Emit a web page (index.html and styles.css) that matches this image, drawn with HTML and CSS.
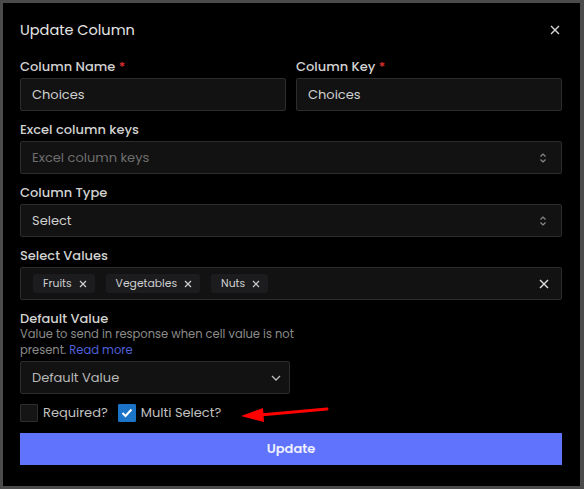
FILE: index.html
```html
<!DOCTYPE html>
<html>
<head>
<meta charset="utf-8">
<link rel="stylesheet" href="styles.css">
</head>
<body>
<div class="modal">
  <div class="header">
    <span class="title">Update Column</span>
    <svg class="close" width="10" height="10" viewBox="0 0 10 10"><path d="M1 1L9 9M9 1L1 9" stroke="#d8d8d8" stroke-width="1.4"/></svg>
  </div>
  <div class="form">
    <div class="row2">
      <div class="field">
        <label class="label">Column Name <span class="req">*</span></label>
        <div class="input">Choices</div>
      </div>
      <div class="field">
        <label class="label">Column Key <span class="req">*</span></label>
        <div class="input">Choices</div>
      </div>
    </div>
    <div class="field">
      <label class="label">Excel column keys</label>
      <div class="input select"><span class="placeholder">Excel column keys</span>
        <svg class="updown" width="8" height="12" viewBox="0 0 8 12"><path d="M1.5 4.5L4 2L6.5 4.5M1.5 7.5L4 10L6.5 7.5" fill="none" stroke="#8a8a8a" stroke-width="1.2"/></svg>
      </div>
    </div>
    <div class="field">
      <label class="label">Column Type</label>
      <div class="input select"><span>Select</span>
        <svg class="updown" width="8" height="12" viewBox="0 0 8 12"><path d="M1.5 4.5L4 2L6.5 4.5M1.5 7.5L4 10L6.5 7.5" fill="none" stroke="#8a8a8a" stroke-width="1.2"/></svg>
      </div>
    </div>
    <div class="field">
      <label class="label">Select Values</label>
      <div class="input tags">
        <span class="chip">Fruits <svg width="8" height="8" viewBox="0 0 8 8"><path d="M1 1L7 7M7 1L1 7" stroke="#cfcfcf" stroke-width="1.2"/></svg></span>
        <span class="chip">Vegetables <svg width="8" height="8" viewBox="0 0 8 8"><path d="M1 1L7 7M7 1L1 7" stroke="#cfcfcf" stroke-width="1.2"/></svg></span>
        <span class="chip">Nuts <svg width="8" height="8" viewBox="0 0 8 8"><path d="M1 1L7 7M7 1L1 7" stroke="#cfcfcf" stroke-width="1.2"/></svg></span>
        <svg class="clear" width="10" height="10" viewBox="0 0 10 10"><path d="M1 1L9 9M9 1L1 9" stroke="#e0e0e0" stroke-width="1.4"/></svg>
      </div>
    </div>
    <div class="field">
      <label class="label label-tight">Default Value</label>
      <div class="help">Value to send in response when cell value is not present. <a class="link">Read more</a></div>
      <div class="input select half"><span class="dv">Default Value</span>
        <svg width="10" height="6" viewBox="0 0 10 6"><path d="M1 1L5 5L9 1" fill="none" stroke="#bdbdbd" stroke-width="1.3"/></svg>
      </div>
    </div>
    <div class="checks">
      <span class="check"><span class="box"></span>Required?</span>
      <span class="check"><span class="box on"><svg width="12" height="10" viewBox="0 0 12 10"><path d="M1.5 5L4.5 8L10.5 1.5" fill="none" stroke="#fff" stroke-width="2"/></svg></span>Multi Select?</span>
    </div>
    <button class="btn">Update</button>
  </div>
  <svg class="arrow" width="100" height="20" viewBox="0 0 100 20"><path d="M92 5L25 11" stroke="#f00" stroke-width="3" stroke-linecap="round"/><path d="M6 12L28 4L29 18Z" fill="#f00"/></svg>
</div>
</body>
</html>
```
FILE: styles.css
```css
* { box-sizing: border-box; }
body {
  margin: 0;
  background: #4b4b4b;
  font-family: "Poppins", Inter, "Noto Sans", sans-serif;
  width: 584px;
  height: 489px;
  overflow: hidden;
}
.modal {
  position: relative;
  margin: 3px 0 0 3px;
  width: 577px;
  height: 483px;
  background: #000;
  padding: 15px 18px 0 17px;
}
.header {
  display: flex;
  justify-content: space-between;
  align-items: center;
  height: 24px;
  padding-right: 2px;
}
.title {
  color: #e6e6e6;
  font-size: 14.5px;
}
.form {
  margin-top: 14px;
  display: flex;
  flex-direction: column;
  gap: 8px;
}
.row2 {
  display: grid;
  grid-template-columns: 266px 266px;
  gap: 10px;
}
.field { display: flex; flex-direction: column; }
.label {
  color: #d2d2d2;
  font-size: 13px;
  line-height: 18px;
  padding-top: 2px;
  margin-bottom: 2px;
  font-weight: 500;
}
.label-tight {
  line-height: 14px;
  padding-top: 4px;
  margin-bottom: 0;
}
.req { color: #e0312f; }
.input {
  height: 33px;
  background: #121212;
  border: 1px solid #2c2c2e;
  border-radius: 2px;
  color: #cfcfcf;
  font-size: 13px;
  padding: 0 11px;
  display: flex;
  align-items: center;
}
.select { justify-content: space-between; padding-right: 14px; }
.placeholder { color: #6e6e6e; }
.tags { gap: 11px; padding-left: 12px; padding-right: 12px; }
.chip {
  display: inline-flex;
  align-items: center;
  gap: 7px;
  height: 19px;
  background: #1c1c1f;
  border-radius: 3px;
  padding: 0 8px 0 10px;
  color: #cfcfcf;
  font-size: 10.8px;
}
.clear { margin-left: auto; }
.help {
  color: #8b8b8b;
  font-size: 11.5px;
  line-height: 16px;
  margin-bottom: 3px;
  width: 290px;
}
.link { color: #4f61d8; }
.half { width: 270px; padding-right: 8px; }
.dv { color: #b8b8b8; font-size: 13px; }
.checks {
  display: flex;
  gap: 10px;
  align-items: center;
  margin-top: 2px;
  height: 18px;
}
.check {
  display: inline-flex;
  align-items: center;
  gap: 5px;
  color: #c0c0c0;
  font-size: 13px;
}
.box {
  width: 18px;
  height: 18px;
  background: #151515;
  border: 1px solid #2e2e2e;
  border-radius: 1px;
  display: inline-flex;
  align-items: center;
  justify-content: center;
}
.box.on { background: #1b74c8; border-color: #1b74c8; }
.btn {
  margin-top: 3px;
  height: 32px;
  border: none;
  background: #5f73fd;
  color: #eef0ff;
  font-family: inherit;
  font-size: 13px;
  font-weight: 600;
  border-radius: 0;
  width: 100%;
}
.arrow {
  position: absolute;
  left: 232px;
  top: 401px;
}
```
